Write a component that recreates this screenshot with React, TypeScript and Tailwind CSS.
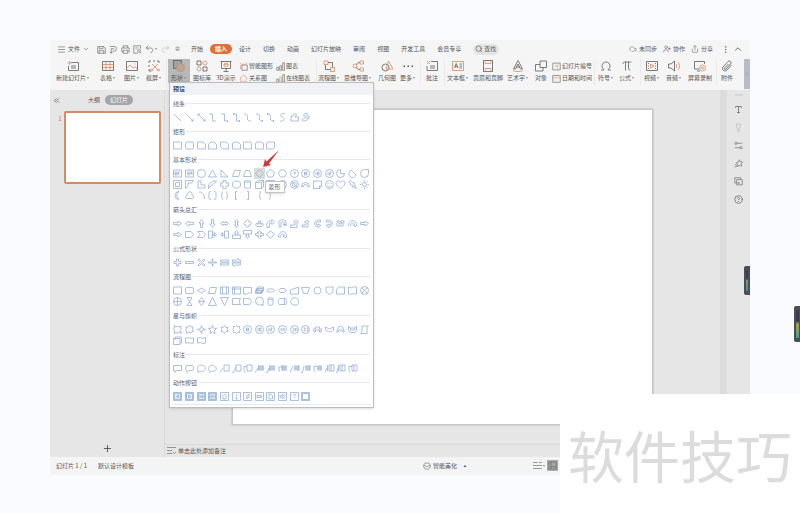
import { useState } from 'react';
import type { ReactNode } from 'react';
import { ChevronUp, ChevronsLeft, CircleHelp, CloudCheck, EllipsisVertical, Lightbulb, MenuIcon, Omega, Pi, Plus, Search, Share, Type, UserPlus } from 'lucide-react';

type IconProps = { gray?: string; orange?: string; size?: string; children?: ReactNode };

/** Two-tone line icon on a 12 x 12 grid */
function Icon({ gray, orange, size = 'size-3', children }: IconProps) {
  return (
    <svg viewBox="0 0 12 12" className={`${size} shrink-0 fill-none`} strokeWidth={0.8} strokeLinejoin="round">
      {gray && <path d={gray} className="stroke-[#5c5c5c]" />}
      {orange && <path d={orange} className="stroke-[#d98a62]" />}
      {children}
    </svg>
  );
}

function Caret() {
  return (
    <svg viewBox="0 0 4 4" className="size-1 shrink-0 fill-[#808080]">
      <path d="M.8 1.2h2.4L2 2.8z" />
    </svg>
  );
}

function Divider() {
  return <div className="mr-px ml-[2px] h-7 w-px shrink-0 bg-[#ebebeb]" />;
}

type ToolProps = { label: string; width: string; icon: ReactNode; caret?: boolean; active?: boolean; onClick?: () => void };

function Tool({ label, width, icon, caret, active, onClick }: ToolProps) {
  return (
    <button
      type="button"
      onClick={onClick}
      className={`${width} ${active ? 'bg-[#b7b7b7]' : 'hover:bg-[#e4e4e4]'} mt-px flex h-6 shrink-0 flex-col items-center gap-[2px] pt-px`}
    >
      {icon}
      <span className="flex items-center leading-[8px] whitespace-nowrap">
        {label}
        {caret && <Caret />}
      </span>
    </button>
  );
}

function SmallTool({ label, icon }: { label: string; icon: ReactNode }) {
  return (
    <button type="button" className="flex h-3 items-center gap-px whitespace-nowrap">
      {icon}
      {label}
    </button>
  );
}

const tabs = ['开始', '插入', '设计', '切换', '动画', '幻灯片放映', '审阅', '视图', '开发工具', '会员专享'];

// Shape outlines, all on an 11 x 11 grid
const circle = 'M9.5 5.5a4 4 0 1 1-8 0a4 4 0 1 1 8 0z';
const square = 'M1.5 2h8v7h-8z';
const pad = 'M1.5 1.5h8v8h-8z';
const callRect = 'M5 2h5v6H5z';
const callFill = 'M5 3h5M5 4h5M5 5h5M5 6h5M5 7h5';

const sections = [
  {
    title: '线条',
    shapes: [
      'M2 2l7 7',
      'M2 2l7 7M9 7v2H7',
      'M2 2l7 7M9 7v2H7M2 4V2h2',
      'M2 2h3.500v7H9',
      'M2 2h3.500v7H9M8 8l1 1-1 1',
      'M2 2h3.500v7H9M8 8l1 1-1 1M3 1L2 2l1 1',
      'M2 2c8 0-1 7 7 7',
      'M2 2c8 0-1 7 7 7M8 8l1 1-1 1',
      'M2 2c8 0-1 7 7 7M8 8l1 1-1 1M3 1L2 2l1 1',
      'M8 2C4 0 2 4 5 5s3 5-2 4',
      'M2 4h2.500c-1-2 3-3 3-1L6 5h3.500v4H2z',
      'M8 2C4 0 2 4 5 4s5-1 4 2-8 4-7 2 5-3 7-1',
    ],
  },
  {
    title: '矩形',
    shapes: [
      square,
      'M3 2h5a1.500 1.500 0 0 1 1.500 1.500v4A1.500 1.500 0 0 1 8 9H3a1.500 1.500 0 0 1-1.500-1.500v-4A1.500 1.500 0 0 1 3 2z',
      'M1.500 2H7l2.500 2.500V9h-8z',
      'M1.500 9V4.500L4 2h3l2.500 2.500V9z',
      'M1.500 2H7l2.500 2.500V9H4L1.500 6.500z',
      'M1.500 9V4a2 2 0 0 1 2-2H7l2.500 2.500V9z',
      'M1.500 2h6a2 2 0 0 1 2 2v5h-8z',
      'M1.500 9V4a2 2 0 0 1 2-2h4a2 2 0 0 1 2 2v5z',
      'M1.500 9V4a2 2 0 0 1 2-2h6v5a2 2 0 0 1-2 2z',
    ],
  },
  {
    title: '基本形状',
    shapes: [
      square + 'M3 4h2v3H3zM6.500 4v3M6.500 4H8M3 5.500h2',
      square + 'M3 4h5M3 5.500h5M3 7h3M8 4v3',
      circle,
      'M5.500 2l4 7h-8z',
      'M2 2l7 7H2z',
      'M3.500 2.500h6l-2 6h-6z',
      'M3.500 2.500h4l2 6h-8z',
      'M5.500 1.500l4 4-4 4-4-4z',
      'M5.500 1.500l4 3L8 9H3L1.500 4.500z',
      'M3.500 2h4l2 3.500-2 3.500h-4l-2-3.500z',
      circle + 'M4.500 4h2l-1 3',
      circle + 'M4.500 4h2v3h-2zM4.500 5.500h2',
      circle + 'M4 4v3M5.500 4H7v3H5.500z',
      circle + 'M4 4v3M5.500 4H7v1.500H5.500V7H7',
      'M5.500 1.500v4h4a4 4 0 1 1-4-4z',
      'M4 2l5 5c-1 4-7 3-7-1 0-2 1-3 2-4z',
      'M9.500 1.500v4a4 4 0 1 1-4-4z',
      pad + 'M3.500 3.500h4v4h-4z',
      'M1.500 1.500h8L7.500 4H4v3.500l-2.500 2z',
      'M2 2h3v4h4v3H2z',
      'M6 2h3.500l-8 7.500V6z',
      'M4 1.500h3V4h2.500v3H7v2.500H4V7H1.500V4H4z',
      'M3.500 2h4l2 2v3l-2 2h-4l-2-2V4z',
      'M2.500 2.500c0-1 6-1 6 0v6c0 1-6 1-6 0zM2.500 2.500c0 1 6 1 6 0',
      'M1.500 3.500l2-2h6v6l-2 2h-6zM1.500 3.500h6v6M7.500 3.500l2-2',
      pad + 'M3 3h5v5H3zM1.500 1.500L3 3',
      circle + 'M7.500 5.500a2 2 0 1 1-4 0a2 2 0 1 1 4 0z',
      circle + 'M7.500 5.500a2 2 0 1 1-4 0a2 2 0 1 1 4 0zM3 3l5 5',
      'M1.500 7.500a4 4 0 0 1 8 0h-2a2 2 0 0 0-4 0z',
      'M1.500 2h8v5l-2 2.500h-6zM7.500 9.500V7h2',
      circle + 'M3.500 6.500c1 2 3 2 4 0M4 4v1M7 4v1',
      'M5.500 9.500c-9-6-2-10 0-6 2-4 9 0 0 6z',
      'M3.500 1.500L6 3.500l1.500 1-1 .5 2 1.500-1 .5 2 2.500-4.500-2 1-.5-3-1.500 1-.5L1.500 3z',
      'M7.500 5.500a2 2 0 1 1-4 0a2 2 0 1 1 4 0zM5.500 1v1.500M5.500 8.500V10M1 5.500h1.500M8.500 5.500H10M2.300 2.300l1 1M7.700 7.700l1 1M8.700 2.300l-1 1M2.300 8.700l1-1',
      'M7 1.500a4 4 0 1 0 0 8c-3-1.500-3-6.500 0-8z',
      'M3 8.500c-2 0-2-3 0-3 0-5 6-5 5 0 2 0 2 3 0 3z',
      'M3 2c4 0 5.500 3 5.500 7',
      'M4 1.500c-2 0-2 1-2 2v4c0 1 0 2 2 2M7 1.500c2 0 2 1 2 2v4c0 1 0 2-2 2',
      'M4 1.500c-2 0 0 4-2 4 2 0 0 4 2 4M7 1.500c2 0 0 4 2 4-2 0 0 4-2 4',
      'M6 1.500H4.500v8H6',
      'M5 1.500h1.500v8H5',
      'M7 1.500c-2 0 0 4-2 4 2 0 0 4 2 4',
      'M4 1.500c2 0 0 4 2 4-2 0 0 4-2 4',
    ],
  },
  {
    title: '箭头总汇',
    shapes: [
      'M1.500 4.500H6V3l3.500 2.500L6 8V6.500H1.500z',
      'M9.500 4.500H5V3L1.500 5.500 5 8V6.500h4.500z',
      'M4.500 9.500V5H3l2.500-3.500L8 5H6.500v4.500z',
      'M4.500 1.500V6H3l2.500 3.500L8 6H6.500V1.500z',
      'M1.500 5.500l2.500-2v1h3v-1l2.500 2-2.500 2v-1H4v1z',
      'M5.500 1.500l2 2.500h-1v3h1l-2 2.500-2-2.500h1V4h-1z',
      'M5.500 1.500L7 3v1h1l1.500 1.500L8 7H7v1L5.500 9.500 4 8V7H3L1.500 5.500 3 4h1V3z',
      'M5.500 2.500L7 4H6v2h2V5l1.500 2L8 8.500H3L1.500 7 3 5v1h2V4H4z',
      'M2 9.500V5.500C2 4 3 3 4.500 3H7V1.500L9.500 4 7 6.500V5H4.500v4.500z',
      'M2 9V4c0-3 7-3 7 0v3H7V4.500c0-1-3-1-3 0V9zM6 7h4',
      'M1.500 9.500V7H6V4H4.500l2.500-2.500L9.500 4H8v5.500z',
      'M2 9V7h4V4H4.500L7 2l2 2H8v5z',
      'M8.500 2C1 1 1 9 6 8.500v1L9 7.500 6 6v1C3 7 3 3 8.500 4z',
      'M2.500 2C10 1 10 9 5 8.500v1L2 7.500 5 6v1c3 0 3-4-2.500-3z',
      'M2 3v5h6V4h1.500L7 2 5 4h1.500v2H4V3z',
      'M1.500 8c0-7 8-7 8-1M3.500 8c0-4 4-4 4-1H6l2 2 2-2',
      'M1.500 4.500H6V3l3.500 2.500L6 8V6.500H1.500z',
      'M1.500 4.500H6V3l3.500 2.500L6 8V6.500H1.500l1-1z',
      'M1.500 2.500H7l2.500 3L7 8.500H1.500z',
      'M1.500 2.500H7l2.500 3L7 8.500H1.500l2.500-3z',
      'M1.500 2h4v7h-4zM5.500 5h2V3.500l2 2-2 2V6h-2',
      'M5.500 2h4v7h-4zM5.500 5h-2V3.500l-2 2 2 2V6h2',
      'M1.500 6h8v3.500h-8zM4.500 6V4H3.500l2-2.500 2 2.500h-1v2',
      'M1.500 1.500h8V5h-8zM4.500 5v2H3.500l2 2.500 2-2.500h-1V5',
      'M5.500 1.500l2 2h-1v1h3v2h-3v1h1l-2 2-2-2h1v-1h-3v-2h3v-1h-1z',
      'M5.500 1.500l1.500 2h.5V4l2 1.500-2 1.500v.5H7l-1.500 2-1.500-2h-.5V7l-2-1.500 2-1.500v-.5H4z',
      'M1.500 8c0-7 8-7 8-1M3.500 8c0-4 4-4 4-1H6l2 2 2-2M1.500 8h2',
    ],
  },
  {
    title: '公式形状',
    shapes: [
      'M4.500 2h2v2.500H9v2H6.500V9h-2V6.500H2v-2h2.500z',
      'M1.500 4.500h8v2h-8z',
      'M2 3l1-1 2.500 2.500L8 2l1 1-2.500 2.500L9 8 8 9 5.500 6.500 3 9 2 8l2.500-2.500z',
      'M1.500 5h8v1h-8zM5 2h1v1.500H5zM5 7.500h1V9H5z',
      'M1.500 3h8v2h-8zM1.500 6h8v2h-8z',
      'M1.500 3h4l1-1.500 1 .5v1h2v2h-8zM1.500 6h8v2h-5l-1 1.500-1-.5v-1h-1z',
    ],
  },
  {
    title: '流程图',
    shapes: [
      square,
      'M3 2.500h5a1.500 1.500 0 0 1 1.500 1.500v3A1.500 1.500 0 0 1 8 8.500H3A1.500 1.500 0 0 1 1.500 7V4A1.500 1.500 0 0 1 3 2.500z',
      'M5.500 3l4 2.500-4 2.500-4-2.500z',
      'M3 2.500h6.500l-1.500 6H1.500z',
      square + 'M3.500 2v7M7.500 2v7',
      square + 'M3.500 2v7M1.500 4h8',
      'M1.500 2.500h8V8c-4-1-4 2-8 1z',
      'M3.500 2h6v4h-6zM2.500 3.500h6v4h-6zM1.500 5h6v3.500h-6z',
      'M3.500 4h4a1.500 1.500 0 0 1 0 3h-4a1.500 1.500 0 0 1 0-3z',
      'M3.500 3.500h4l2 2-2 2h-4l-2-2z',
      'M1.500 5l8-3v7h-8z',
      'M1.500 2.500h8l-2 6h-4z',
      'M9 5.500a3.500 3.500 0 1 1-7 0a3.500 3.500 0 1 1 7 0z',
      'M2 2h7v5L5.500 9.500 2 7z',
      'M4 2h5.500v7h-8V4.500z',
      'M1.500 2c4 2 4-1 8 0v7c-4-1-4 1-8 0z',
      circle + 'M2.700 2.700l5.600 5.600M8.300 2.700L2.700 8.300',
      circle + 'M1.500 5.500h8M5.500 1.500v8',
      'M3 1.500h5l-5 8h5z',
      'M5.500 1.500l3 4-3 4-3-4zM2.500 5.500h6',
      'M5.500 1.500l4 8h-8z',
      'M1.500 1.500h8l-4 8z',
      'M1.500 2.500h8c-1.500 2-1.500 4 0 6h-8z',
      'M1.500 2.500H6c4.500 0 4.500 6 0 6H1.500z',
      'M9.500 9h-4a4 4 0 1 1 4-4c0 2-1 3-1.500 4z',
      'M3 2.500c0-1 5-1 5 0v6c0 1-5 1-5 0zM3 3.500h5',
      'M2.500 2.500h6c1.500 0 1.500 6 0 6h-6c-1.500 0-1.500-6 0-6zM7.500 2.500v6',
      'M3.500 2h4c3 0 3 7 0 7h-4l-2-3.500z',
    ],
  },
  {
    title: '星与旗帜',
    shapes: [
      'M2 1.500l2 1.500 1.500-1 1 1 2.500-1-.5 2L9.500 5 8 6.500l1.500 3L7 8 5.500 9.500 4.500 8 2 9.500l.5-3-1-1.500 1-1z',
      'M2 3h2l2-1.500L7 3h2L8.500 5l1 2.500L8 7.500 7 9 5 8 2.500 9.500V7l-1-1 1-1z',
      'M5.500 1.500l1 3 3 1-3 1-1 3-1-3-3-1 3-1z',
      'M5.500 1.500l1.200 2.700 2.800.3-2 2 .5 3-2.500-1.500L3 9.500l.5-3-2-2 2.800-.3z',
      'M5.500 1.500L7 3.500h2L8 5.500l1 2H7l-1.500 2L4 7.500H2l1-2-1-2h2z',
      'M5.500 1.500l1 1h2v2l1 1-1 1v2h-2l-1 1-1-1h-2v-2l-1-1 1-1v-2h2z',
      circle + 'M4.500 4h2v3h-2zM4.500 5.500h2',
      circle + 'M4 4v3M5.500 4H7v3H5.500z',
      circle + 'M4 4v3M5.500 4H7v1.500H5.500V7H7',
      circle + 'M4 4v3M6 4v3M7 4v3',
      circle + 'M3.500 4H5v3H3.500M6.500 4v3M8 4v3',
      circle + 'M3.500 4H5v3H3.500M6.500 4H8v3H6.500',
      'M1.500 5h2V3h4v2h2L9 8H7.500V6h-4v2H2z',
      'M1.500 3l2 1c1 1 3 1 4 0l2-1v3L8 7c-2 1-3 1-5 0L1.500 6z',
      'M1.500 8l2-5c1-1 3-1 4 0l2 5H7.500L7 6H4l-.5 2z',
      'M1.500 2l2 2h4l2-2v4L8 8.500H3L1.500 6zM3.500 4v2h4V4',
      'M3 2h6.500L8 3.500v6H1.500L3 8z',
      'M1.500 3.500h6.500v6h-6.500zM3 3.500V2h6.500v6H8M3 3.500v1.500',
      'M1.500 3c3-1 5 1 8 0v5c-3 1-5-1-8 0z',
      'M1.500 3l3-.5L6 3.500l3.500-1V8L6 8.500 4.500 7.500 1.500 8z',
    ],
  },
  {
    title: '标注',
    shapes: [
      'M1.500 2.500h8v5h-5L3 9.500v-2H1.500z',
      'M3 2.500h5c2 0 2 5 0 5H5L3 9.500v-2c-2 0-2-5 0-5z',
      'M3.500 8.500L2 9.500v-2C0 4 3 2 5.500 2s4 2 4 3.500-3 4-6 3z',
      'M4 8c-3 1-3-4-1-5 2-2 4-.5 5 .5 2 1 2 4-1 4.500-1 .5-2 .5-3 0zM2 9.500h1',
      callRect + 'M1 9.500L4 5',
      callRect + 'M1 9.500h1.500L5 4',
      callRect + 'M5 3.500H2v4l1 2',
      callFill + 'M4.500 2v6M1 9.500L4 5',
      callFill + 'M4.500 2v6M1 9.500h1.500L4 5',
      callFill + 'M5 2v6M5 4H2v3l1 2',
      callFill + 'M1 9.500L4 3M10 2v6',
      callFill + 'M1 9.500h1.500L4 3M10 2v6',
      callFill + 'M5 3.500H2v3l1 2.500',
      callRect + 'M3.500 2v6M7 2v6M1 9.500L3 5',
      callRect + 'M3.500 2v6M7 2v6M1 9.500h1L3 5',
      callRect + 'M7 2v6M5 3.500H2v4l1 2',
    ],
  },
  {
    title: '动作按钮',
    filled: 4,
    shapes: [
      pad + 'M2.500 2.500h6v6h-6zM6.500 4v3L4 5.500z',
      pad + 'M2.500 2.500h6v6h-6zM4.500 4v3L7 5.500z',
      pad + 'M2.500 2.500h6v6h-6zM7 4v3L4.500 5.500zM4 4v3',
      pad + 'M2.500 2.500h6v6h-6zM4 4v3l2.500-1.500zM7 4v3',
      pad + 'M3 5.500L5.500 3 8 5.500M4 5.500V8h3V5.500',
      pad + 'M5.500 3v1M5 5h.7v3M4.500 8h2',
      pad + 'M7 3v3L5 8V6H4l3-3',
      pad + 'M3 4.500h4v2H3zM7 5h1v1',
      pad + 'M4 3h2l1.500 1.500V8H4z',
      pad + 'M3 4.500h1.500L6 3v5L4.500 6.500H3zM7 4.500l1-1M7 5.500h1M7 6.500l1 1',
      pad + 'M4 4.500C4 3 7 3 7 4.500 7 5 5.500 5.500 5.500 6.500M5.500 7.500v.5',
      pad + 'M2.500 2.500h6v6h-6z',
    ],
  },
];

function ShapeMenu() {
  return (
    <div className="absolute top-6 left-px z-20 w-[205px] border border-[#bdbdbd] bg-white pb-[2px] text-[#5b6270] shadow-sm">
      <h2 className="h-3 bg-[#f0f2f5] pl-[3px] text-[6px] leading-[12px] font-bold text-[#3e4c68]">预设</h2>
      {sections.map((section) => (
        <section key={section.title} className="pr-[3px] pl-[2px]">
          <h3 className="flex h-[17px] items-center gap-px pl-px text-[6px]">
            {section.title}
            <span className="h-px flex-1 bg-[#e6eaf0]" />
          </h3>
          <div className="grid grid-cols-17">
            {section.shapes.map((d, i) => {
              const hovered = section.title === '基本形状' && i === 7;
              return (
                <div key={i} className="relative">
                  <button
                    type="button"
                    aria-label={`${section.title} ${i + 1}`}
                    className={`flex h-[11px] w-full items-center justify-center ${hovered ? 'bg-[#dcdcdc]' : 'hover:bg-[#dcdcdc]'}`}
                  >
                    <svg
                      viewBox="0 0 11 11"
                      className={`size-[11px] stroke-[#8aa5d0] ${i < (section.filled ?? 0) ? 'fill-[#e9f0fb]' : 'fill-none'}`}
                      strokeWidth={0.7}
                      strokeLinejoin="round"
                    >
                      <path d={d} />
                    </svg>
                  </button>
                  {hovered && (
                    <>
                      <svg viewBox="0 0 18 18" className="absolute bottom-[11px] left-2 z-10 size-[18px] fill-[#cf3a3c]">
                        <path d="M1 17l2-8 1.500 2.500L17 0 7 13.500 9 15z" />
                      </svg>
                      <span role="tooltip" className="absolute top-[13px] left-[11px] z-10 border border-[#c4c4c4] bg-white px-[3px] text-[6px] leading-[10px] whitespace-nowrap shadow">
                        菱形
                      </span>
                    </>
                  )}
                </div>
              );
            })}
          </div>
        </section>
      ))}
      <div className="mx-[2px] mt-[2px] h-px bg-[#e6eaf0]" />
    </div>
  );
}

function TitleBar() {
  const [tab, setTab] = useState('插入');

  return (
    <div className="flex h-[18px] items-center pr-[7px] pl-[7px]">
      <button type="button" className="flex items-center gap-[2px]">
        <MenuIcon size={9} strokeWidth={1.5} />
        文件
        <Icon gray="M3 4.500l3 3 3-3" size="size-2" />
      </button>
      <div className="ml-[7px] flex items-center gap-[3px]">
        <button type="button" aria-label="保存"><Icon gray="M2 2h7l2 2v7H1V2zM3 2v3h5V2M3 11V7.500h6V11" size="size-[9px]" /></button>
        <button type="button" aria-label="输出"><Icon gray="M1 2h6a3 3 0 0 1 0 6H5M3 4v7M1 9l2 2 2-2M4 5h3" size="size-[9px]" /></button>
        <button type="button" aria-label="打印"><Icon gray="M3 4V1h6v3M3 9H1V4h10v5H9M3 7h6v4H3z" size="size-[9px]" /></button>
        <button type="button" aria-label="预览"><Icon gray="M10 5V1H1v10h5M10 8a2 2 0 1 1-4 0a2 2 0 1 1 4 0zM9.500 9.500L11 11M3 4h4" size="size-[9px]" /></button>
        <button type="button" aria-label="撤销" className="flex items-center"><Icon gray="M4 1L1.500 4 5 6M2 4h5c5 0 4 6 0 6" size="size-[9px]" /><Caret /></button>
        <button type="button" aria-label="恢复" className="opacity-40"><Icon gray="M8 1l2.500 3L7 6M10 4H5C0 4 1 10 5 10" size="size-[9px]" /></button>
        <button type="button" aria-label="自定义"><Icon gray="M3.500 3h5M3.500 5.500h5L6 8z" size="size-[9px]" /></button>
      </div>
      <nav className="ml-[9px] flex items-center gap-3">
        {tabs.map((name) => (
          <button
            key={name}
            type="button"
            onClick={() => setTab(name)}
            className={name === tab ? '-mx-[5px] rounded-full bg-[#de6f3b] px-[5px] leading-[10px] font-bold text-white' : 'leading-[10px] whitespace-nowrap'}
          >
            {name}
          </button>
        ))}
      </nav>
      <label className="ml-3 flex h-[11px] w-[26px] items-center gap-px rounded-full bg-[#e5e5e5] pl-[2px]">
        <Search size={8} strokeWidth={2} className="shrink-0" />
        <input type="text" aria-label="查找" placeholder="查找" className="w-[14px] bg-transparent placeholder:text-[#5a5a5a] focus:outline-none" />
      </label>
      <div className="ml-auto flex items-center gap-[6px]">
        <button type="button" className="flex items-center gap-[2px]"><CloudCheck size={8} strokeWidth={1.5} />未同步</button>
        <button type="button" className="flex items-center gap-[2px]"><UserPlus size={8} strokeWidth={1.5} />协作</button>
        <button type="button" className="flex items-center gap-[2px]"><Share size={8} strokeWidth={1.5} />分享</button>
      </div>
      <div className="ml-2 flex items-center gap-[3px]">
        <button type="button" aria-label="更多选项"><EllipsisVertical size={9} strokeWidth={1.5} /></button>
        <button type="button" aria-label="收起"><ChevronUp size={10} strokeWidth={2} /></button>
      </div>
    </div>
  );
}

function Toolbar() {
  const [open, setOpen] = useState(true);

  return (
    <div className="flex h-8">
      <Tool label="新建幻灯片" width="w-[46px]" caret icon={<Icon gray="M4 2.500h7.500v8H1.500V6M4 6h5M4 8h5" orange="M2.500 1v4M.5 3h4" />} />
      <Tool label="表格" width="w-6" caret icon={<Icon gray="M.5 1.500h11v9H.5z" orange="M.5 4.500h11M.5 7.500h11M4 1.500v9M8 1.500v9" />} />
      <Tool label="图片" width="w-6" caret icon={<Icon gray="M.5 1.500h11v9H.5z" orange="M1 8.500l3-3.500 3 3 2-1.500L11 9M9 3.500v1" />} />
      <Tool label="截屏" width="w-5" caret icon={<Icon gray="M1 3V1h2M5 1h2M9 1h2v2M1 5v2M1 9v2h2" orange="M4 4l6 6M10 4l-6 6M11.500 10a1 1 0 1 1-2 0a1 1 0 1 1 2 0zM4.500 10a1 1 0 1 1-2 0a1 1 0 1 1 2 0z" />} />
      <Divider />
      <div className="relative shrink-0">
        <Tool
          label="形状"
          width="w-[22px]"
          caret
          active={open}
          onClick={() => setOpen(!open)}
          icon={
            <Icon>
              <path d="M.5.5h8v8h-8z" className="fill-[#a2a2a2] stroke-[#5c5c5c]" />
              <path d="M11.500 7.500a4 4 0 1 1-8 0a4 4 0 1 1 8 0z" className="fill-[#b9a79c] stroke-[#cf8a66]" />
            </Icon>
          }
        />
        {open && <ShapeMenu />}
      </div>
      <Tool label="图标库" width="w-6" icon={<Icon gray="M1 1h4v4H1zM7 7h4v4H7z" orange="M11 3a2 2 0 1 1-4 0a2 2 0 1 1 4 0zM5 9a2 2 0 1 1-4 0a2 2 0 1 1 4 0z" />} />
      <Tool label="3D演示" width="w-6" icon={<Icon gray="M.5 1.500h11M1.500 1.500v7h9v-7M6 8.500V11M3.500 11.500h5" orange="M6 3l2 1v2L6 7 4 6V4zM4 4l2 1 2-1" />} />
      <div className="mt-[2px] w-[38px] shrink-0 pl-px">
        <SmallTool label="智能图形" icon={<Icon gray="M4 4h7v7H4z" orange="M1 1l2 2h6l2-2M2 4v5h2" size="size-[9px]" />} />
        <SmallTool label="关系图" icon={<Icon orange="M6 1.500L10.500 5 9 10.500H3L1.500 5z" size="size-[9px]" />} />
      </div>
      <div className="mt-[2px] w-[38px] shrink-0">
        <SmallTool label="图表" icon={<Icon gray="M1 7h2.500v4H1zM5 5h2.500v6H5zM9 1h2.500v10H9z" size="size-[9px]" />} />
        <SmallTool label="在线图表" icon={<Icon gray="M1 7h2.500v4H1zM9 1h2.500v10H9z" orange="M5 4h2.500v7H5z" size="size-[9px]" />} />
      </div>
      <Divider />
      <Tool label="流程图" width="w-[22px]" caret icon={<Icon gray="M5 2.500h4.500V7M2.500 5v4.500H7" orange="M1 1h4v3.500H1zM7.500 7.500h4v4h-4z" />} />
      <Tool label="思维导图" width="w-9" caret icon={<Icon gray="M4.500 5C5 3 6 2.500 8 2.500M4.500 7C5 9 6 9.500 8 9.500" orange="M5 6a2 2 0 1 1-4 0a2 2 0 1 1 4 0zM8 1h3.500v3H8zM8 8h3.500v3H8z" />} />
      <Tool label="几何图" width="w-[22px]" icon={<Icon gray="M8 7.500a3.500 3.500 0 1 1-7 0a3.500 3.500 0 1 1 7 0z" orange="M7.500 1l4.500 8H5z" />} />
      <Tool label="更多" width="w-5" caret icon={<Icon><path d="M1.500 5.500h1.500v1.500H1.500zM5.500 5.500H7v1.500H5.500zM9.500 5.500H11v1.500H9.500z" className="fill-[#5c5c5c]" /></Icon>} />
      <Divider />
      <Tool label="批注" width="w-5" icon={<Icon gray="M5 1.500h6.500v9H1V6M4 6h5M4 8h5" orange="M1 1l3 3M4 1L1 4" />} />
      <Divider />
      <Tool label="文本框" width="w-6" caret icon={<Icon gray="M2.500 8l1.700-4.500L6 8M3 6.700h2.500M7.500 4H10M7.500 6H10M7.500 8H10" orange="M.5 1.500h11v9H.5z" />} />
      <Tool label="页眉和页脚" width="w-9" icon={<Icon gray="M1.500.5h9v11h-9z" orange="M3 1.500v2h6v-2M3 10.500v-2h6v2" />} />
      <Tool label="艺术字" width="w-6" caret icon={<Icon gray="M1.500 9L6 .5 10.500 9H8.500L6 4 3.500 9zM4 7h4" orange="M1 10.500c3 1.500 7 1.500 10 0" />} />
      <Tool label="对象" width="w-[22px]" icon={<Icon gray="M5 1h6.500v6.500H5zM5 4.500H.5V11H8V7.500" />} />
      <div className="mt-[2px] w-10 shrink-0">
        <SmallTool label="幻灯片编号" icon={<Icon gray="M1 1.500h10v9H1z" orange="M4 5h3v4M7 4h2" size="size-[9px]" />} />
        <SmallTool label="日期和时间" icon={<Icon gray="M1 2h10v9H1z" orange="M1 5h10M4 1v2M8 1v2M3.500 8h1M7 8h1" size="size-[9px]" />} />
      </div>
      <Divider />
      <Tool label="符号" width="w-5" caret icon={<Omega size={12} strokeWidth={1.5} />} />
      <Tool label="公式" width="w-[22px]" caret icon={<Pi size={12} strokeWidth={1.5} />} />
      <Divider />
      <Tool label="视频" width="w-5" caret icon={<Icon gray="M.5 1.500h11v9H.5zM2.500 3v1M2.500 5.500v1M2.500 8v1M9.500 3v1M9.500 5.500v1M9.500 8v1" orange="M4.500 4l3.500 2-3.500 2z" />} />
      <Tool label="音频" width="w-6" caret icon={<Icon gray="M.5 4h2.500L6.500 1v10L3 8H.500z" orange="M8 4c1 1 1 3 0 4M10 2c2 2.500 2 5.500 0 8" />} />
      <Tool label="屏幕录制" width="w-7" icon={<Icon gray="M5 9H.5V1.500h10V4M3 11h3" orange="M11.500 8a3 3 0 1 1-6 0a3 3 0 1 1 6 0zM9.500 8a1 1 0 1 1-2 0a1 1 0 1 1 2 0z" />} />
      <Divider />
      <Tool label="附件" width="w-[18px]" icon={<Icon gray="M10.500 5L6 10c-2.500 2.500-6-.5-4-3l5-5.500c2-1.500 4 .5 2.500 2.500l-4.500 5c-1 1-2.500 0-1.500-1L7.500 4" />} />
      <button type="button" aria-label="向右滚动" className="mt-px ml-auto flex h-[30px] w-[6px] shrink-0 items-center justify-center bg-[#b8bbc5]">
        <Icon gray="M4 3l4 3-4 3" size="size-1" />
      </button>
    </div>
  );
}

function SlideList() {
  return (
    <aside className="flex w-[115px] shrink-0 flex-col border-r border-[#d9d9d9]">
      <div className="flex items-center pt-[5px] pl-[2px]">
        <ChevronsLeft size={9} strokeWidth={2} />
        <button type="button" className="ml-[27px] text-[6px]">大纲</button>
        <button type="button" className="ml-[5px] rounded-full bg-[#a5a5a5] px-[5px] text-[6px] leading-[10px] text-white">幻灯片</button>
      </div>
      <div className="flex gap-[2px] pt-[6px] pr-[3px] pl-2">
        <span className="pt-[3px] text-[7px] leading-[8px] text-[#c9805a]">1</span>
        <div className="aspect-[4/3] flex-1 rounded-[2px] border-2 border-[#d38c66] bg-white" />
      </div>
      <button type="button" aria-label="新建幻灯片" className="mt-auto mb-[3px] self-center">
        <Plus size={11} strokeWidth={2} />
      </button>
    </aside>
  );
}

function SideTools() {
  return (
    <aside className="flex w-[23px] shrink-0 flex-col items-center gap-[9px] pt-1 text-[#666]">
      <div className="h-[2px] w-2 bg-[#d5d5d5]" />
      <button type="button" aria-label="文字"><Type size={9} strokeWidth={2} /></button>
      <button type="button" aria-label="灵感" className="opacity-40"><Lightbulb size={9} strokeWidth={2} /></button>
      <button type="button" aria-label="属性"><Icon gray="M4 3h7M1 9h7M4 3a1.500 1.500 0 1 1-3 0a1.500 1.500 0 1 1 3 0zM11 9a1.500 1.500 0 1 1-3 0a1.500 1.500 0 1 1 3 0z" size="size-[9px]" /></button>
      <button type="button" aria-label="动画"><Icon gray="M7 1l1.500 2.500L11.500 4 9.500 6.500l.5 3-3-1-3 1.500.5-3L3 5l3-1zM1 8l2-1M1 11l3-2" size="size-[9px]" /></button>
      <button type="button" aria-label="切换"><Icon gray="M3 8H1V1h8v2M3.500 3.500H11v7H3.500zM6 9l-1-1 1-1M5 8h3" size="size-[9px]" /></button>
      <button type="button" aria-label="帮助"><CircleHelp size={9} strokeWidth={2} /></button>
    </aside>
  );
}

function StatusBar() {
  return (
    <footer className="flex h-[18px] items-center bg-[#f4f4f4] pr-48 pl-[6px]">
      <span className="w-[42px] whitespace-nowrap">幻灯片 1 / 1</span>
      <span className="whitespace-nowrap">默认设计模板</span>
      <button type="button" className="mr-[66px] ml-auto flex items-center gap-[2px]">
        <Icon gray="M3 1.500h6L11.500 6 9 10.500H3L.5 6zM1 5l5 2 5-2" size="size-2" />
        智能美化
        <svg viewBox="0 0 4 4" className="ml-1 size-1 fill-[#555]"><path d="M.5 3L2 1l1.500 2z" /></svg>
      </button>
      <button type="button" aria-label="备注" className="flex items-center"><Icon gray="M0 2h6M8 2h4M0 6h12M0 10h12" size="size-[9px]" /><Caret /></button>
      <button type="button" aria-label="普通视图" className="ml-px bg-[#a9a9a9] p-px"><Icon gray="M1 1.500h10v9H1zM4 1.500v9M4 7.500h7" size="size-[9px]" /></button>
    </footer>
  );
}

export default function App() {
  return (
    <div className="relative min-h-screen overflow-hidden bg-[#fafbfe] px-[50px] pt-10 font-['Noto_Sans_CJK_SC',sans-serif] text-[6px] leading-[10px] text-[#555]">
      <div className="relative">
        <header className="border-b border-[#dedede] bg-[#f5f5f5]">
          <TitleBar />
          <Toolbar />
        </header>

        <div className="-mt-px flex bg-[#e6e6e6]">
          <SlideList />
          <main className="min-w-0 flex-1">
            <div className="px-[67px] py-[19px]">
              <div className="aspect-[4/3] border border-[#c6c6c6] bg-white shadow-[0_0_2px_#aaa]" />
            </div>
            <label className="flex h-[13px] items-center gap-[2px] border-t border-[#d9d9d9] pl-[2px]">
              <Icon gray="M0 2h12M0 6h7M0 10h7M8 8l2 2 2-2" size="size-[9px]" />
              <input type="text" aria-label="备注" placeholder="单击此处添加备注" className="flex-1 bg-transparent placeholder:text-[#555] focus:outline-none" />
            </label>
          </main>
          <div className="w-[7px] shrink-0 bg-[#dcdcdc]" />
          <SideTools />
        </div>

        <StatusBar />

        {/* Volume meter docked on the window edge */}
        <div className="absolute top-[226px] right-0 h-[29px] w-[6px] rounded-l-[2px] bg-[#4b4d58] py-1 pl-[2px]">
          <div className="h-full w-[2px] bg-linear-to-b from-[#3a3c4c] from-40% via-[#7f9a62] to-[#3f8f8c]" />
        </div>
      </div>

      <div className="absolute top-[306px] right-0 h-9 w-[6px] rounded-l-[2px] bg-[#4b4d58] py-1 pl-[2px]">
        <div className="h-full w-[3px] bg-linear-to-b from-[#3a3c4c] from-40% via-[#a3a455] to-[#3f9a80]" />
      </div>

      <div className="absolute right-0 bottom-0 z-30 flex h-[119px] w-60 items-center justify-center bg-white text-[56px] leading-[119px] text-[#dcdcdc]">
        软件技巧
      </div>
    </div>
  );
}
